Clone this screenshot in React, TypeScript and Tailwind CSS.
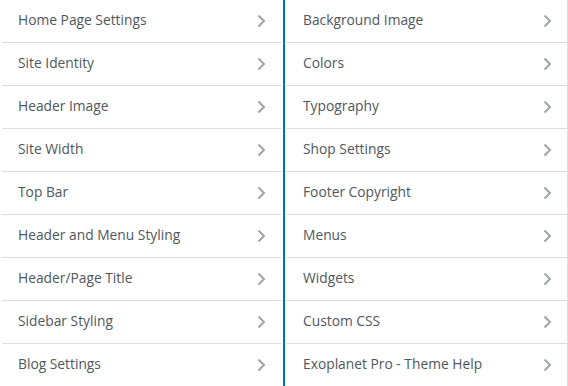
import React from 'react';

const left = [
  'Home Page Settings',
  'Site Identity',
  'Header Image',
  'Site Width',
  'Top Bar',
  'Header and Menu Styling',
  'Header/Page Title',
  'Sidebar Styling',
  'Blog Settings',
];

const right = [
  'Background Image',
  'Colors',
  'Typography',
  'Shop Settings',
  'Footer Copyright',
  'Menus',
  'Widgets',
  'Custom CSS',
  'Exoplanet Pro - Theme Help',
];

function Chevron() {
  return (
    <svg width="10" height="16" viewBox="0 0 10 16" className="shrink-0">
      <path d="M2.5 2.5 L8 8 L2.5 13.5" fill="none" stroke="#a0a5aa" strokeWidth="2" />
    </svg>
  );
}

function Row({ label }: { label: string }) {
  return (
    <div className="h-[43px] pl-[2px]">
      <div className="flex h-full items-center justify-between border-b border-[#dddddd] pb-px pl-4 pr-[15px]">
        <span className="text-[13.8px] text-[#50575e]">{label}</span>
        <Chevron />
      </div>
    </div>
  );
}

export default function App() {
  return (
    <div
      className="flex h-[386px] w-[568px] overflow-hidden bg-white"
      style={{ fontFamily: '"Open Sans", "Noto Sans", sans-serif' }}
    >
      <div className="w-[283px] pr-[2px]">
        {left.map((l) => (
          <Row key={l} label={l} />
        ))}
      </div>
      <div className="w-[2px] bg-[#0073aa]" />
      <div className="flex-1 border-r border-[#dddddd]">
        {right.map((l) => (
          <Row key={l} label={l} />
        ))}
      </div>
    </div>
  );
}
